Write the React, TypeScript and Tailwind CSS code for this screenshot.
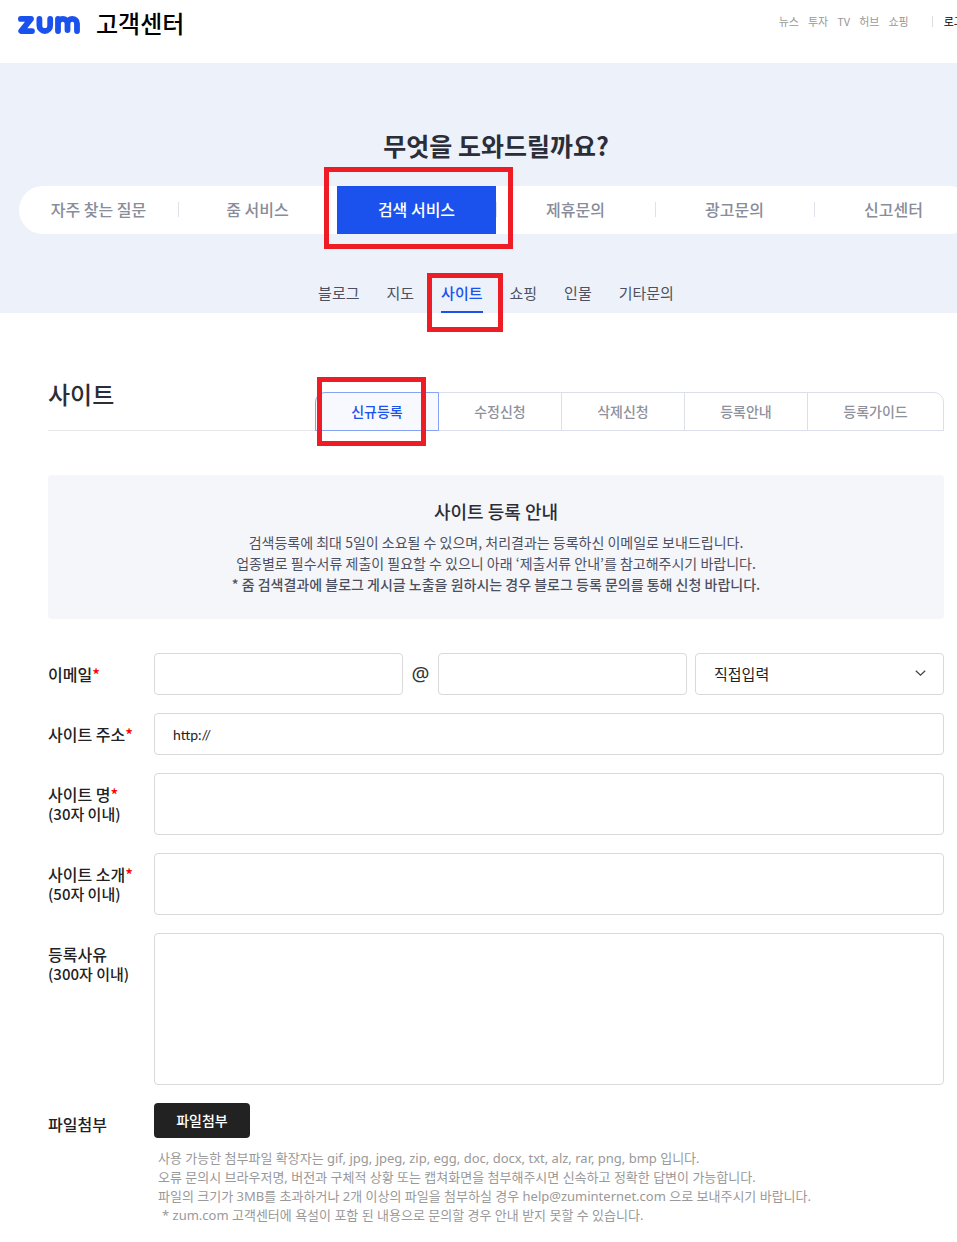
import { useState } from 'react';
import type { ReactNode } from 'react';

const SERVICES = ['뉴스', '투자', 'TV', '허브', '쇼핑'];
const CATEGORIES = ['자주 찾는 질문', '줌 서비스', '검색 서비스', '제휴문의', '광고문의', '신고센터'];
const TOPICS = ['블로그', '지도', '사이트', '쇼핑', '인물', '기타문의'];
const TABS = ['신규등록', '수정신청', '삭제신청', '등록안내', '등록가이드'];

const FIELD = 'block w-full rounded-[4px] border border-[#d9d9d9] bg-white px-[18px] text-[#222] focus:outline-none focus:border-[#1b52ed]';

function Logo() {
  return (
    <svg className="mt-1" width="62" height="18" viewBox="0 0 62 18" fill="none" stroke="#1b52ed" strokeWidth="5.8" strokeLinecap="round" strokeLinejoin="round" aria-label="zum">
      <path d="M2.9 2.9H13L3.2 15.1H14" />
      <path d="M21.4 2.9V9.4A5.4 5.6 0 0 0 32.2 9.4V2.9" />
      <path d="M40 15.1V2.9M40 7.4A4.75 4.5 0 0 1 49.5 7.4V14M49.5 7.4A4.75 4.5 0 0 1 59 7.4V15.1" />
    </svg>
  );
}

function Row({ label, note, id, required, children }: { label: string; note?: string; id: string; required?: boolean; children: ReactNode }) {
  return (
    <div className="flex">
      <label htmlFor={id} className="w-[106px] shrink-0 pt-[11px] text-base leading-5 font-medium text-[#222]">
        {label}
        {required && <span className="text-[#f00]">*</span>}
        {note && <span className="block text-[15px]">{note}</span>}
      </label>
      <div className="min-w-0 flex-1">{children}</div>
    </div>
  );
}

export default function App() {
  const [tab, setTab] = useState('신규등록');
  const [url, setUrl] = useState('http://');

  return (
    <div className="overflow-x-hidden bg-white font-['Noto_Sans_CJK_KR',sans-serif]">
      <div className="min-w-[992px] pb-4">
        <header className="flex h-[63px] items-start justify-between px-[18px]">
          <a href="#" className="flex items-center gap-4 pt-[5px] text-2xl leading-9 font-medium text-black">
            <Logo />
            고객센터
          </a>
          <nav className="flex items-center gap-[9px] pt-[13px] text-[11px] leading-4 text-[#999]">
            {SERVICES.map(s => (
              <a key={s} href="#">{s}</a>
            ))}
            <span className="ml-3.5 h-[11px] w-px bg-[#ddd]" />
            <a href="#" className="ml-0.5 text-black">로그인</a>
          </nav>
        </header>

        <section className="flex h-[250px] flex-col bg-[#ecf1fa] px-[19px]">
          <h1 className="pt-16 text-center text-[25px] leading-9 font-bold text-[#2b2d38]">무엇을 도와드릴까요?</h1>
          <nav className="mt-[23px] flex h-12 rounded-full bg-white">
            {CATEGORIES.map((c, i) => (
              <a key={c} href="#"
                className={`relative flex flex-1 items-center justify-center pb-0.5 text-base font-medium ${c === '검색 서비스' ? 'bg-[#1b52ed] text-white' : 'text-[#888c9b]'}`}>
                {c}
                {i < CATEGORIES.length - 1 && <span className="absolute -right-px h-[15px] w-px bg-[#dfe1ea]" />}
                {c === '검색 서비스' && <span className="absolute -top-[19px] -right-[17px] -bottom-[15px] -left-[13px] border-5 border-[#ee1c24]" />}
              </a>
            ))}
          </nav>
          <nav className="mt-auto flex justify-center gap-[27px] text-[15px]">
            {TOPICS.map(t => (
              <a key={t} href="#"
                className={`relative h-[39px] border-b-2 pt-[7px] leading-6 ${t === '사이트' ? 'border-[#1b52ed] font-medium text-[#1b52ed]' : 'border-transparent text-[#4d5060]'}`}>
                {t}
                {t === '사이트' && <span className="absolute -top-px -right-5 -bottom-[21px] -left-3.5 border-5 border-[#ee1c24]" />}
              </a>
            ))}
          </nav>
        </section>

        <main className="px-12">
          <div className="mt-[63px] flex items-end justify-between border-b border-[#e8e8e8]">
            <h2 className="pb-[18px] text-2xl leading-9 font-medium text-[#2b2d38]">사이트</h2>
            <div className="-mb-px flex">
              {TABS.map(t => (
                <button key={t} type="button" onClick={() => setTab(t)}
                  className={`relative -ml-px h-[39px] w-[124px] border pb-0.5 text-sm font-medium first:rounded-tl-[10px] last:w-[137px] last:rounded-tr-[10px] ${tab === t ? 'z-10 border-[#86a3f5] bg-[#f7f9ff] text-[#1b52ed]' : 'border-[#dcdfea] bg-white text-[#8e919c]'}`}>
                  {t}
                  {t === '신규등록' && <span className="absolute -top-4 right-3 -bottom-4 left-px border-5 border-[#ee1c24]" />}
                </button>
              ))}
            </div>
          </div>

          <section className="mt-11 h-36 rounded-[4px] bg-[#f5f6fa] pt-6 text-center text-sm leading-[21px] text-[#4d5060]">
            <h3 className="mb-[9px] text-lg leading-6 font-medium text-[#2b2d38]">사이트 등록 안내</h3>
            <p>검색등록에 최대 5일이 소요될 수 있으며, 처리결과는 등록하신 이메일로 보내드립니다.</p>
            <p>업종별로 필수서류 제출이 필요할 수 있으니 아래 ‘제출서류 안내’를 참고해주시기 바랍니다.</p>
            <p className="font-medium">* 줌 검색결과에 블로그 게시글 노출을 원하시는 경우 블로그 등록 문의를 통해 신청 바랍니다.</p>
          </section>

          <form className="mt-[34px] space-y-[18px]" onSubmit={e => e.preventDefault()}>
            <Row label="이메일" id="email" required>
              <div className="flex items-center">
                <div className="min-w-0 flex-1">
                  <input id="email" className={`${FIELD} h-[42px] text-sm`} />
                </div>
                <span className="w-[35px] text-center font-['Noto_Sans'] text-xl text-[#333]">@</span>
                <div className="min-w-0 flex-1">
                  <input aria-label="이메일 도메인" className={`${FIELD} h-[42px] text-sm`} />
                </div>
                <div className="relative ml-2 min-w-0 flex-1">
                  <select aria-label="이메일 도메인 선택" className={`${FIELD} h-[42px] appearance-none text-[15px]`}>
                    <option>직접입력</option>
                  </select>
                  <svg className="pointer-events-none absolute top-[17px] right-[18px]" width="11" height="7" viewBox="0 0 11 7" fill="none" stroke="#444" strokeWidth="1.3">
                    <path d="M0.8 0.8L5.5 5.2L10.2 0.8" />
                  </svg>
                </div>
              </div>
            </Row>
            <Row label="사이트 주소" id="url" required>
              <input id="url" value={url} onChange={e => setUrl(e.target.value)} className={`${FIELD} h-[42px] font-['Lato'] text-sm`} />
            </Row>
            <Row label="사이트 명" note="(30자 이내)" id="name" required>
              <textarea id="name" maxLength={30} className={`${FIELD} h-[62px] resize-none py-2.5 text-sm`} />
            </Row>
            <Row label="사이트 소개" note="(50자 이내)" id="intro" required>
              <textarea id="intro" maxLength={50} className={`${FIELD} h-[62px] resize-none py-2.5 text-sm`} />
            </Row>
            <Row label="등록사유" note="(300자 이내)" id="reason">
              <textarea id="reason" maxLength={300} className={`${FIELD} h-[152px] resize-none py-2.5 text-sm`} />
            </Row>
            <Row label="파일첨부" id="file">
              <button id="file" type="button" className="h-[35px] w-24 rounded-[4px] bg-[#222] pb-0.5 text-sm font-medium text-white">파일첨부</button>
              <div className="mt-[11px] pl-1 font-['Noto_Sans','Noto_Sans_CJK_KR',sans-serif] text-[13px] leading-[19px] text-[#999]">
                <p>사용 가능한 첨부파일 확장자는 gif, jpg, jpeg, zip, egg, doc, docx, txt, alz, rar, png, bmp 입니다.</p>
                <p>오류 문의시 브라우저명, 버전과 구체적 상황 또는 캡쳐화면을 첨부해주시면 신속하고 정확한 답변이 가능합니다.</p>
                <p>파일의 크기가 3MB를 초과하거나 2개 이상의 파일을 첨부하실 경우 help@zuminternet.com 으로 보내주시기 바랍니다.</p>
                <p className="pl-1">* zum.com 고객센터에 욕설이 포함 된 내용으로 문의할 경우 안내 받지 못할 수 있습니다.</p>
              </div>
            </Row>
          </form>
        </main>
      </div>
    </div>
  );
}
